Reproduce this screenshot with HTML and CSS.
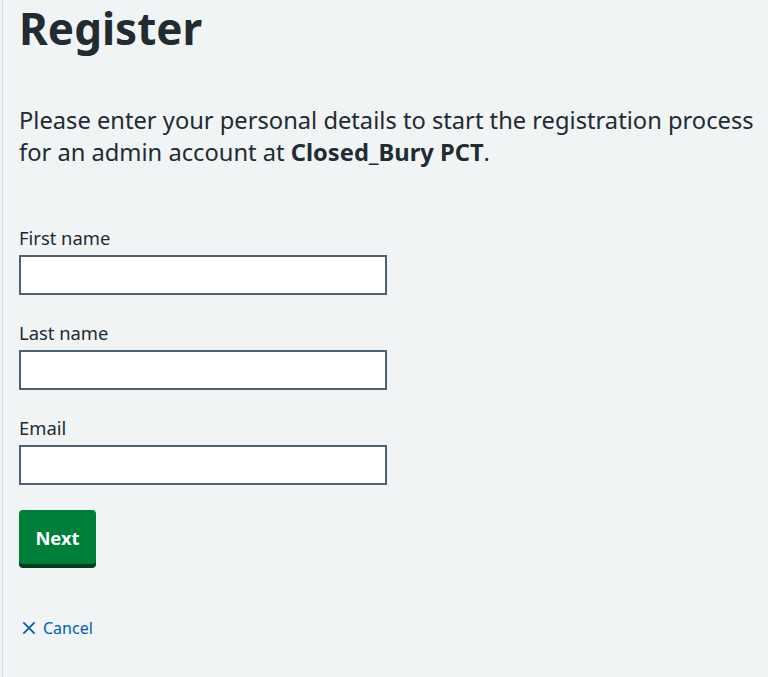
FILE: index.html
```html
<!DOCTYPE html>
<html lang="en">
<head>
<meta charset="utf-8">
<title>Register</title>
<link rel="stylesheet" href="styles.css">
</head>
<body>
<main class="page">
  <h1 class="title">Register</h1>
  <p class="lede">Please enter your personal details to start the registration process<br>for an admin account at <strong>Closed_Bury PCT</strong>.</p>
  <form class="form">
    <div class="field">
      <label class="label" for="first">First name</label>
      <input class="input" id="first" type="text">
    </div>
    <div class="field">
      <label class="label" for="last">Last name</label>
      <input class="input" id="last" type="text">
    </div>
    <div class="field">
      <label class="label" for="email">Email</label>
      <input class="input" id="email" type="email">
    </div>
    <button class="button" type="button">Next</button>
  </form>
  <a class="cancel" href="#">
    <svg class="cancel-icon" viewBox="0 0 16 16" width="16" height="16" aria-hidden="true"><path d="M1.5 1.5 L14.5 14.5 M14.5 1.5 L1.5 14.5" stroke="#005eb8" stroke-width="2" fill="none"/></svg>
    <span>Cancel</span>
  </a>
</main>
</body>
</html>
```

FILE: styles.css
```css
html, body {
  margin: 0;
  padding: 0;
  background: #f0f4f5;
  height: 100%;
}
body {
  font-family: "Noto Sans", "Open Sans", sans-serif;
  color: #212b32;
}
.page {
  margin-left: 2px;
  border-left: 1px solid #d8dde0;
  padding-left: 16px;
  padding-top: 1px;
  min-height: 100%;
  box-sizing: border-box;
}
.title {
  font-size: 44px;
  line-height: 56px;
  font-weight: 700;
  margin: -1px 0 48px 0;
}
.lede {
  font-size: 23.7px;
  line-height: 32px;
  margin: 0 0 56px 0;
}
.form {
  display: flex;
  flex-direction: column;
  align-items: flex-start;
}
.field {
  display: flex;
  flex-direction: column;
  margin-bottom: 24px;
}
.label {
  font-size: 18.4px;
  line-height: 28px;
  margin-bottom: 3px;
}
.input {
  width: 368px;
  height: 40px;
  box-sizing: border-box;
  border: 2px solid #4c6272;
  background: #fff;
  margin: 0;
  padding: 4px;
  font: inherit;
}
.button {
  margin-top: 1px;
  background: #007f3b;
  color: #fff;
  border: 0;
  border-radius: 4px;
  box-shadow: 0 4px 0 #00401e;
  font-family: inherit;
  font-weight: 700;
  font-size: 18.4px;
  height: 54px;
  width: 77px;
  padding: 0;
}
.cancel {
  display: inline-flex;
  align-items: center;
  gap: 7px;
  margin-top: 52px;
  margin-left: 3px;
  color: #005eb8;
  text-decoration: none;
  font-size: 16px;
  line-height: 24px;
}
.cancel-icon {
  width: 14px;
  height: 14px;
}
```
